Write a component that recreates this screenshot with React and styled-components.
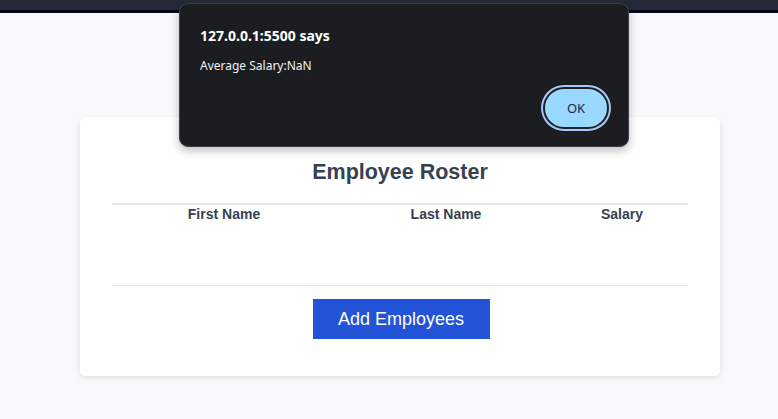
import React from "react";
import styled, { createGlobalStyle } from "styled-components";

const Global = createGlobalStyle`
  html, body { margin: 0; padding: 0; }
  body {
    background: #f8f9fb;
    font-family: "Liberation Sans", Arial, sans-serif;
    width: 778px;
    height: 419px;
    overflow: hidden;
    position: relative;
  }
`;

const TopBar = styled.header`
  height: 10px;
  background: #252a3a;
  border-bottom: 3px solid #040817;
`;

const Main = styled.main`
  padding: 104px 0 0 80px;
`;

const Card = styled.section`
  width: 640px;
  box-sizing: border-box;
  background: #ffffff;
  border-radius: 6px;
  box-shadow: 0 2px 6px rgba(0, 0, 0, 0.1);
  padding: 32px 32px 37px;
  display: flex;
  flex-direction: column;
  align-items: center;
`;

const Title = styled.h1`
  margin: 11px 0 18px;
  font-size: 21.5px;
  line-height: 25px;
  font-weight: 700;
  color: #364252;
`;

const Table = styled.div`
  align-self: stretch;
  border-top: 2px solid #e5e7eb;
  border-bottom: 1px solid #e5e7eb;
  height: 80px;
  box-sizing: content-box;
`;

const HeadRow = styled.div`
  display: grid;
  grid-template-columns: 224px 220px 132px;
  padding-top: 1px;
`;

const Th = styled.div`
  text-align: center;
  font-size: 14px;
  line-height: 16px;
  font-weight: 700;
  color: #374151;
`;

const AddButton = styled.button`
  margin: 13px 0 0 2px;
  width: 177px;
  height: 40px;
  border: none;
  border-radius: 0;
  background: #2353d6;
  color: #ffffff;
  font-family: "Liberation Sans", Arial, sans-serif;
  font-size: 18px;
  cursor: pointer;
`;

const Dialog = styled.div`
  position: absolute;
  left: 179px;
  top: 3px;
  width: 450px;
  height: 144px;
  box-sizing: border-box;
  background: #1b1d21;
  border: 1px solid #3c3f45;
  border-radius: 9px;
  box-shadow: 0 4px 10px rgba(0, 0, 0, 0.25);
  padding: 22px 16px 15px 20px;
  display: flex;
  flex-direction: column;
  font-family: "Noto Sans", "Open Sans", sans-serif;
`;

const DialogTitle = styled.div`
  font-size: 14px;
  line-height: 20px;
  font-weight: 700;
  color: #ffffff;
`;

const DialogMessage = styled.div`
  margin-top: 12px;
  font-size: 12px;
  line-height: 16px;
  color: #f1f3f4;
`;

const DialogActions = styled.div`
  margin-top: auto;
  display: flex;
  justify-content: flex-end;
`;

const OkButton = styled.button`
  width: 66px;
  height: 42px;
  margin: 0 3px 2px 0;
  border-radius: 21px;
  border: 2px solid #202124;
  background: #99d8ff;
  box-shadow: 0 0 0 2px #a8c7fa;
  color: #1f2a44;
  font-family: "Noto Sans", "Open Sans", sans-serif;
  font-size: 13px;
  padding: 0;
`;

export default function App() {
  return (
    <>
      <Global />
      <TopBar />
      <Main>
        <Card>
          <Title>Employee Roster</Title>
          <Table>
            <HeadRow>
              <Th>First Name</Th>
              <Th>Last Name</Th>
              <Th>Salary</Th>
            </HeadRow>
          </Table>
          <AddButton>Add Employees</AddButton>
        </Card>
      </Main>
      <Dialog role="alertdialog">
        <DialogTitle>127.0.0.1:5500 says</DialogTitle>
        <DialogMessage>Average Salary:NaN</DialogMessage>
        <DialogActions>
          <OkButton>OK</OkButton>
        </DialogActions>
      </Dialog>
    </>
  );
}
